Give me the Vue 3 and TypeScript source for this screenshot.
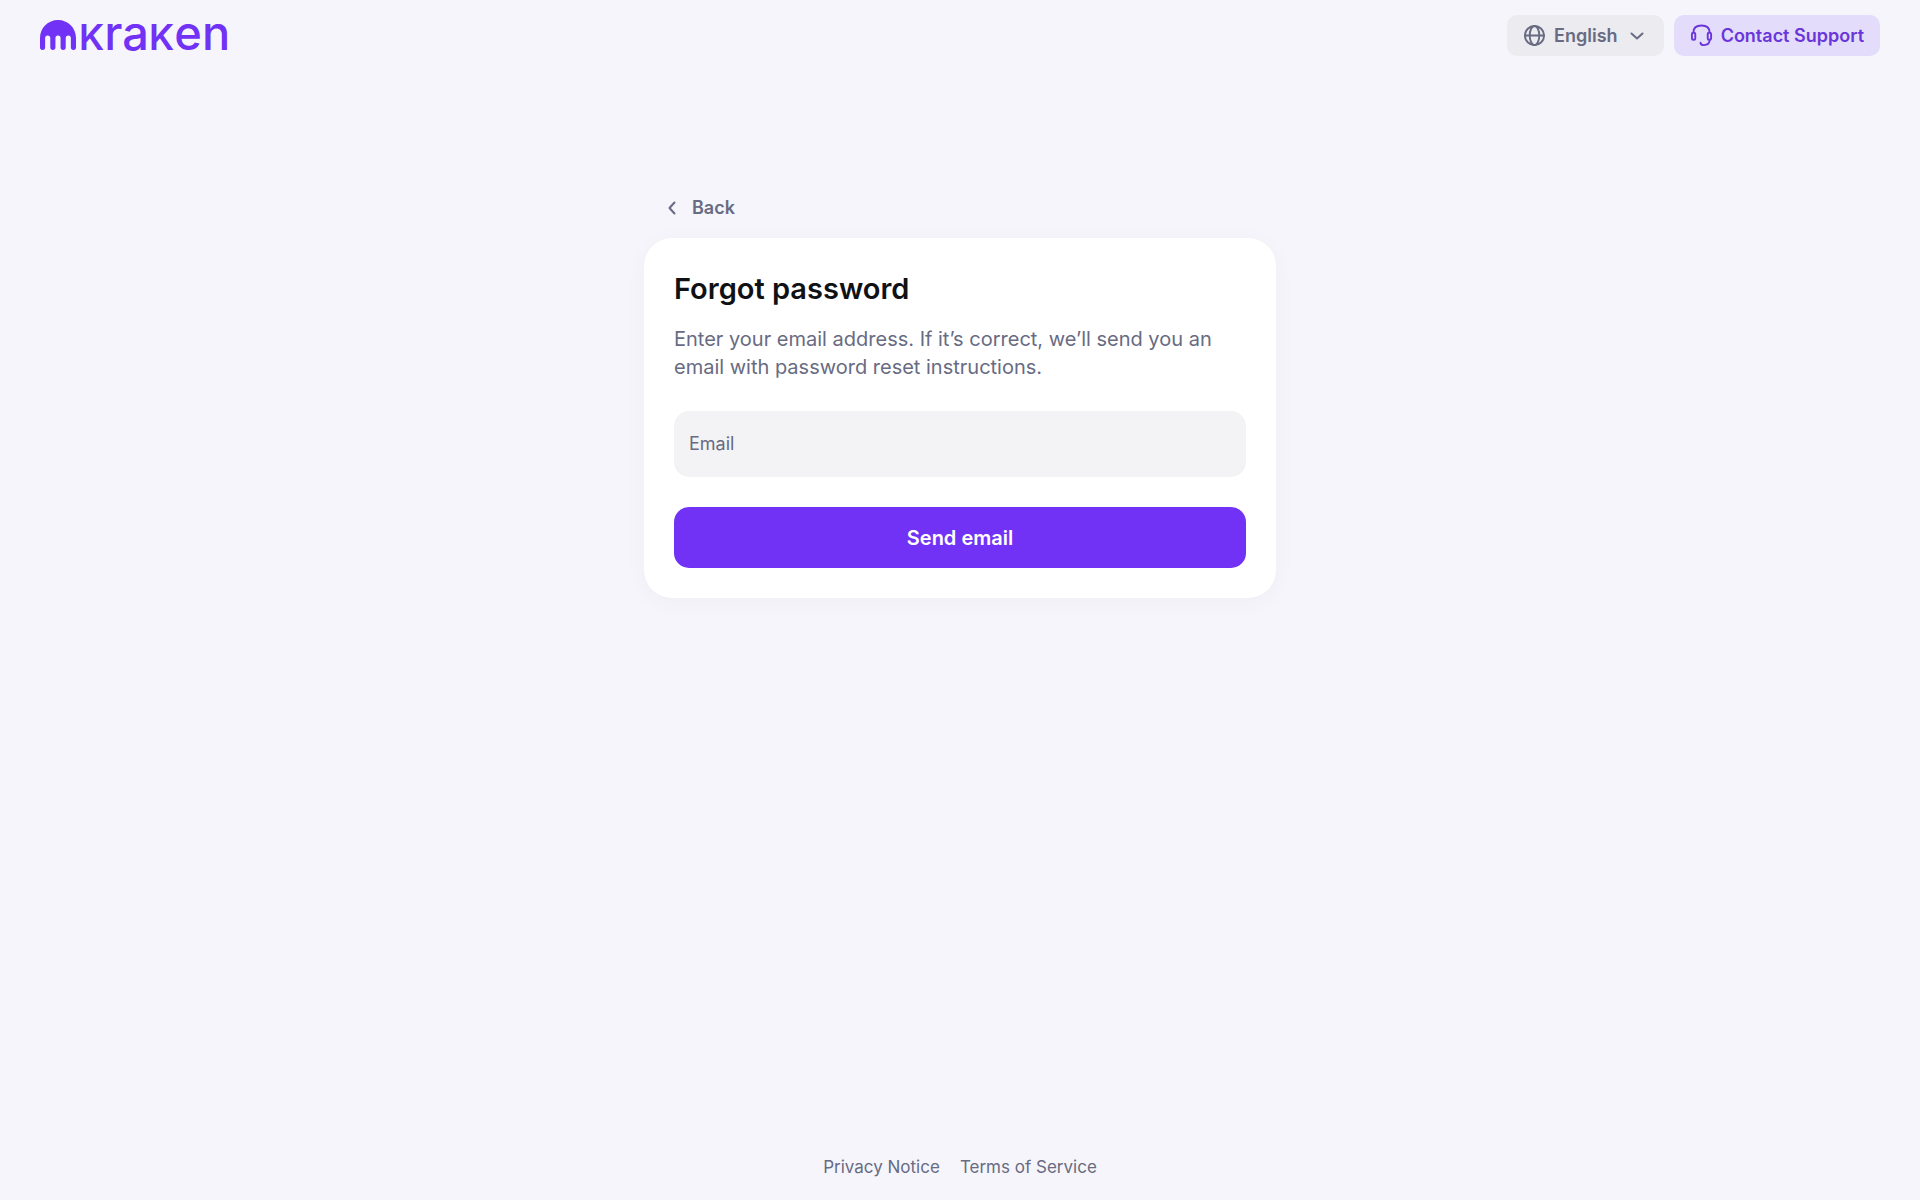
<script setup lang="ts">
import { ref } from 'vue'

const email = ref<string>('')
const links: string[] = ['Privacy Notice', 'Terms of Service']
</script>

<template>
  <div class="page">
    <header class="header">
      <a class="logo" href="#" aria-label="Kraken">
        <svg class="mark" viewBox="0 0 35 29" aria-hidden="true">
          <path d="M17.500 0C7.800 0 0 7.800 0 17.300V26.500a2.500 2.500 0 0 0 5 0V17.500a2.500 2.500 0 0 1 5 0V26.500a2.500 2.500 0 0 0 5 0V17.500a2.500 2.500 0 0 1 5 0V26.500a2.500 2.500 0 0 0 5 0V17.500a2.500 2.500 0 0 1 5 0V26.500a2.500 2.500 0 0 0 5 0V17.300C35 7.800 27.200 0 17.500 0Z" />
        </svg>
        <span class="wordmark"><span class="cap">k</span>ra<span class="cap">k</span>en</span>
      </a>
      <div class="actions">
        <button class="chip language" type="button">
          <svg class="icon" viewBox="0 0 24 24" aria-hidden="true">
            <circle cx="12" cy="12" r="10" />
            <ellipse cx="12" cy="12" rx="5" ry="10" />
            <path d="M2 12h20" />
          </svg>
          <span>English</span>
          <svg class="chevron" viewBox="0 0 16 16" aria-hidden="true"><path d="M2.500 5.500L8 10.500l5.500-5" /></svg>
        </button>
        <button class="chip support" type="button">
          <svg class="icon" viewBox="0 0 24 24" aria-hidden="true">
            <path d="M3.500 9C3.500 4 7 1.500 12 1.500S20.500 4 20.500 9" />
            <rect x="2" y="9" width="3.500" height="7.500" rx="1.500" />
            <rect x="18.500" y="9" width="3.500" height="7.500" rx="1.500" />
            <path d="M20.500 16.500c0 3.500-2.500 5.500-6 5.500-2 0-3.500-.8-3.500-2.500" />
          </svg>
          <span>Contact Support</span>
        </button>
      </div>
    </header>

    <main class="main">
      <a class="back" href="#">
        <svg class="chevron" viewBox="0 0 16 16" aria-hidden="true"><path d="M10.500 2.500L5.500 8l5 5.500" /></svg>
        <span>Back</span>
      </a>
      <form class="card" @submit.prevent>
        <h1>Forgot password</h1>
        <p>Enter your email address. If it’s correct, we’ll send you an email with password reset instructions.</p>
        <div class="field">
          <label for="email">Email</label>
          <input id="email" v-model="email" type="email" />
        </div>
        <button class="submit" type="submit">Send email</button>
      </form>
    </main>

    <footer class="footer">
      <a v-for="link in links" :key="link" href="#">{{ link }}</a>
    </footer>
  </div>
</template>

<style>
body {
  margin: 0;
  background: #f5f5fb;
}
</style>

<style scoped>
.page {
  display: flex;
  flex-direction: column;
  box-sizing: border-box;
  min-height: 100vh;
  font-family: Inter, "Liberation Sans", sans-serif;
  font-size: 18px;
  line-height: 24px;
  color: #686b82;
}

.page a {
  color: inherit;
  text-decoration: none;
}

.page button,
.page input {
  border: 0;
  font: inherit;
}

.header {
  display: flex;
  align-items: center;
  justify-content: space-between;
  padding: 15px 40px;
}

.page .logo {
  display: flex;
  align-items: baseline;
  gap: 3px;
  padding-bottom: 4px;
  color: #7132f5;
}

.mark {
  width: 36px;
  height: 30px;
  fill: currentColor;
}

.wordmark {
  font-size: 47px;
  font-weight: 500;
  line-height: 30px;
}

.cap {
  font-size: 36px;
  font-weight: 600;
  line-height: 0;
  text-transform: uppercase;
}

.actions {
  display: flex;
  gap: 10px;
}

.chip {
  display: flex;
  align-items: center;
  gap: 8px;
  height: 41px;
  padding: 0 16px;
  border-radius: 10px;
  cursor: pointer;
}

.page .chip {
  font-weight: 600;
}

.chip.language {
  background: #ebebf0;
  color: #686b82;
}

.chip.support {
  background: #e3ddfb;
  color: #6a36d9;
}

.icon,
.chevron {
  flex: none;
  fill: none;
  stroke: currentColor;
  stroke-width: 2;
  stroke-linecap: round;
  stroke-linejoin: round;
}

.icon {
  width: 23px;
  height: 23px;
}

.chevron {
  width: 16px;
  height: 16px;
}

.language .chevron {
  margin: 0 3px;
}

.main {
  display: flex;
  flex: 1;
  flex-direction: column;
  width: 100%;
  max-width: 632px;
  margin: 0 auto;
  padding-top: 125px;
}

.back {
  display: flex;
  align-items: center;
  align-self: flex-start;
  gap: 12px;
  margin-bottom: 18px;
  padding-left: 20px;
  font-weight: 600;
}

.card {
  display: flex;
  flex-direction: column;
  padding: 30px;
  border-radius: 28px;
  background: #fff;
  box-shadow: 0 4px 24px rgb(16 24 40 / 3%);
}

h1 {
  margin: 0 0 15px;
  color: #101114;
  font-size: 29px;
  font-weight: 600;
  line-height: 42px;
}

p {
  margin: 0 0 30px;
  font-size: 20px;
  line-height: 28px;
}

.field {
  display: flex;
  align-items: center;
  height: 66px;
  margin-bottom: 30px;
  padding: 0 15px;
  border-radius: 15px;
  background: #f3f3f5;
}

.field input {
  flex: 1;
  min-width: 0;
  padding: 0 12px;
  outline: 0;
  background: transparent;
  color: #101114;
}

.page .submit {
  height: 61px;
  border-radius: 15px;
  background: #7132f5;
  color: #fff;
  font-size: 20px;
  font-weight: 600;
  cursor: pointer;
}

.footer {
  display: flex;
  justify-content: center;
  gap: 20px;
  padding-bottom: 21px;
  font-size: 17px;
}
</style>
